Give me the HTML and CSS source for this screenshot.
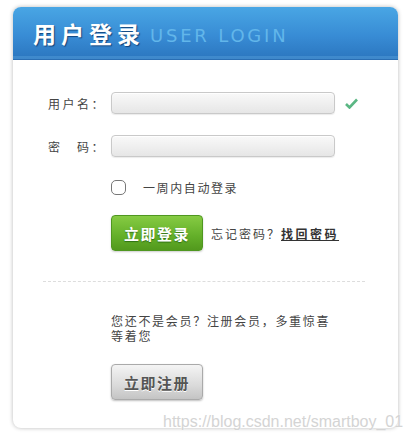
FILE: index.html
```html
<!DOCTYPE html>
<html lang="zh-CN">
<head>
  <meta charset="UTF-8">
  <title>用户登录</title>
  <link rel="stylesheet" href="styles.css">
</head>
<body>
  <div class="login-box">
    <div class="login-head">
      <h1>用户登录</h1>
      <span class="sub">USER LOGIN</span>
    </div>
    <form class="login-form">
      <div class="field">
        <label>用户名：</label>
        <input type="text" class="ipt">
        <svg class="ok" width="13" height="11" viewBox="0 0 13 11"><path d="M1 6 L4.5 9.5 L12 1.5" fill="none" stroke="#5bb784" stroke-width="2.6"/></svg>
      </div>
      <div class="field">
        <label>密&emsp;码：</label>
        <input type="password" class="ipt">
      </div>
      <div class="opts">
        <label class="remember"><span class="box"></span>一周内自动登录</label>
        <div class="actions">
          <button type="button" class="btn btn-green">立即登录</button>
          <span class="forget">忘记密码？<a href="#">找回密码</a></span>
        </div>
      </div>
    </form>
    <hr class="sep">
    <div class="reg">
      <p>您还不是会员？注册会员，多重惊喜等着您</p>
      <button type="button" class="btn btn-grey">立即注册</button>
    </div>
  </div>
  <div class="mark">https://blog.csdn.net/smartboy_01</div>
</body>
</html>
```

FILE: styles.css
```css
* {
  margin: 0;
  padding: 0;
  box-sizing: border-box;
}

body {
  background: #fff;
  font-family: "Noto Sans CJK SC", sans-serif;
  font-size: 12px;
  color: #444;
  width: 407px;
  height: 442px;
  overflow: hidden;
  position: relative;
}

.login-box {
  width: 385px;
  height: 421px;
  margin: 7px 0 0 13px;
  background: #fff;
  border-radius: 8px;
  box-shadow: 0 0 4px rgba(0, 0, 0, 0.28);
  overflow: hidden;
}

.login-head {
  height: 53px;
  display: flex;
  align-items: center;
  gap: 5px;
  padding-left: 20px;
  background: linear-gradient(#49a6e4, #388cd5 55%, #2b76bf);
  border-bottom: 1px solid #2a6eb3;
  box-shadow: inset 0 -3px 0 rgba(120, 190, 240, 0.25);
}

.login-head h1 {
  font-size: 23px;
  font-weight: bold;
  letter-spacing: 5px;
  color: #fff;
  text-shadow: 1px 1px 1px rgba(0, 40, 90, 0.7);
}

.login-head .sub {
  font-family: "DejaVu Sans", sans-serif;
  font-size: 18px;
  letter-spacing: 2.8px;
  color: #62b6ea;
  margin-top: 4px;
}

.login-form {
  padding: 32px 0 0 31px;
}

.field {
  display: flex;
  align-items: center;
  margin-bottom: 21px;
}

.field label {
  width: 67px;
  padding-right: 5px;
  text-align: right;
  letter-spacing: 2.5px;
  color: #444;
}

.ipt {
  width: 224px;
  height: 22px;
  border: 1px solid #c9c9c9;
  border-radius: 4px;
  background: linear-gradient(#f9f9f9, #e6e6e6);
  box-shadow: inset 0 1px 1px rgba(255, 255, 255, 0.9), 0 1px 1px rgba(0, 0, 0, 0.08);
  outline: none;
}

.ok {
  margin-left: 10px;
}

.opts {
  margin-left: 67px;
}

.remember {
  display: flex;
  align-items: center;
  height: 18px;
  letter-spacing: 1.6px;
  color: #444;
}

.remember .box {
  width: 15px;
  height: 15px;
  border: 1px solid #777;
  border-radius: 5px;
  margin-right: 17px;
  background: #fff;
}

.actions {
  display: flex;
  align-items: center;
  margin-top: 19px;
  gap: 8px;
}

.btn {
  width: 92px;
  height: 36px;
  border-radius: 4px;
  font-family: "Noto Sans CJK SC", sans-serif;
  font-size: 15px;
  font-weight: bold;
  letter-spacing: 1.5px;
  cursor: pointer;
}

.btn-green {
  color: #fff;
  border: 1px solid #4f9720;
  background: linear-gradient(#86cb43, #63af29 60%, #52991d);
  text-shadow: 0 1px 1px rgba(0, 60, 0, 0.5);
  box-shadow: 0 1px 2px rgba(0, 0, 0, 0.2);
}

.btn-grey {
  color: #555;
  border: 1px solid #aaa;
  background: linear-gradient(#f4f4f4, #dadada 60%, #c4c4c4);
  text-shadow: 0 1px 0 #fff;
  box-shadow: 0 1px 2px rgba(0, 0, 0, 0.25);
}

.forget {
  letter-spacing: 2px;
  color: #444;
}

.forget a {
  color: #333;
  font-weight: bold;
  letter-spacing: 2.5px;
  text-decoration: underline;
}

.sep {
  margin: 30px 33px 0 30px;
  border: 0;
  border-top: 1px dashed #ddd;
}

.reg {
  padding: 31px 0 0 98px;
}

.reg p {
  width: 226px;
  line-height: 15px;
  letter-spacing: 1.7px;
  color: #444;
}

.reg .btn {
  margin-top: 21px;
}

.mark {
  position: absolute;
  left: 163px;
  top: 413px;
  font-family: "Liberation Sans", sans-serif;
  font-size: 16px;
  color: #d4d4d4;
  white-space: nowrap;
  text-shadow: 0 0 2px #fff;
}
```
